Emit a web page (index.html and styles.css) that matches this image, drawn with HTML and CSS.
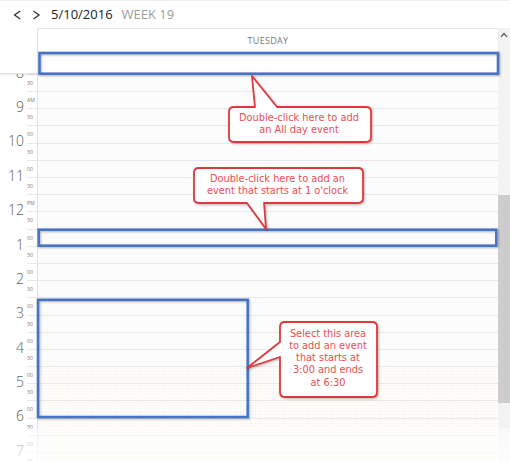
FILE: index.html
```html
<!DOCTYPE html>
<html>
<head>
<meta charset="utf-8">
<link rel="stylesheet" href="styles.css">
</head>
<body>
<div class="app">
  <header class="topbar">
    <span class="nav"><svg width="10" height="12" viewBox="0 0 10 12"><path d="M8.3 2 L2.5 6 L8.3 10" /></svg></span>
    <span class="nav"><svg width="10" height="12" viewBox="0 0 10 12"><path d="M2.5 2 L8 6 L2.5 10" /></svg></span>
    <span class="date">5/10/2016</span>
    <span class="week">WEEK 19</span>
  </header>
  <div class="content">
    <div class="main">
      <div class="dayhead">
        <div class="corner"></div>
        <div class="dayname">TUESDAY</div>
      </div>
      <div class="viewport">
        <div class="timeline">
          <div class="hour"><div class="num">8</div><div class="mark m1">00</div><div class="slot s1"></div><div class="mark m2">30</div><div class="slot s2"></div></div>
          <div class="hour"><div class="num">9</div><div class="mark m1">AM</div><div class="slot s1"></div><div class="mark m2">30</div><div class="slot s2"></div></div>
          <div class="hour"><div class="num">10</div><div class="mark m1">00</div><div class="slot s1"></div><div class="mark m2">30</div><div class="slot s2"></div></div>
          <div class="hour"><div class="num">11</div><div class="mark m1">00</div><div class="slot s1"></div><div class="mark m2">30</div><div class="slot s2"></div></div>
          <div class="hour"><div class="num">12</div><div class="mark m1">PM</div><div class="slot s1"></div><div class="mark m2">30</div><div class="slot s2"></div></div>
          <div class="hour"><div class="num">1</div><div class="mark m1">00</div><div class="slot s1"></div><div class="mark m2">30</div><div class="slot s2"></div></div>
          <div class="hour"><div class="num">2</div><div class="mark m1">00</div><div class="slot s1"></div><div class="mark m2">30</div><div class="slot s2"></div></div>
          <div class="hour"><div class="num">3</div><div class="mark m1">00</div><div class="slot s1"></div><div class="mark m2">30</div><div class="slot s2"></div></div>
          <div class="hour"><div class="num">4</div><div class="mark m1">00</div><div class="slot s1"></div><div class="mark m2">30</div><div class="slot s2"></div></div>
          <div class="hour off"><div class="num">5</div><div class="mark m1">00</div><div class="slot s1"></div><div class="mark m2">30</div><div class="slot s2"></div></div>
          <div class="hour off"><div class="num">6</div><div class="mark m1">00</div><div class="slot s1"></div><div class="mark m2">30</div><div class="slot s2"></div></div>
          <div class="hour off"><div class="num">7</div><div class="mark m1">00</div><div class="slot s1"></div><div class="mark m2">30</div><div class="slot s2"></div></div>
        </div>
      </div>
    </div>
    <div class="scrollbar">
      <svg class="up" width="8" height="6" viewBox="0 0 8 6"><path d="M1 4.8 L4 1.5 L7 4.8" /></svg>
      <div class="thumb"></div>
    </div>
  </div>
  <div class="fade"></div>
  <svg class="annotations" width="510" height="461" viewBox="0 0 510 461">
    <rect class="sel" x="39.5" y="53" width="458.5" height="20.7" />
    <rect class="sel" x="38.7" y="229.7" width="457.6" height="16" />
    <rect class="sel" x="38" y="299.8" width="209.7" height="117.2" />

    <path class="callout" d="M234 107 L255 107 L252 76 L277 107 L366 107 Q371 107 371 112 L371 137 Q371 142 366 142 L234 142 Q229 142 229 137 L229 112 Q229 107 234 107 Z" />
    <text class="note" x="299" y="120.7">Double-click here to add</text>
    <text class="note" x="299" y="133">an All day event</text>

    <path class="callout" d="M199 168 L358 168 Q363 168 363 173 L363 198 Q363 203 358 203 L264 203 L266 229 L247 203 L199 203 Q194 203 194 198 L194 173 Q194 168 199 168 Z" />
    <text class="note" x="277.5" y="182.3">Double-click here to add an</text>
    <text class="note" x="277.5" y="194.3">event that starts at 1 o'clock</text>

    <path class="callout" d="M285 322 L372 322 Q377 322 377 327 L377 392 Q377 397 372 397 L285 397 Q280 397 280 392 L280 357 L247 368 L280 342 L280 327 Q280 322 285 322 Z" />
    <text class="note" x="328" y="337.3">Select this area</text>
    <text class="note" x="328" y="349.3">to add an event</text>
    <text class="note" x="328" y="361.3">that starts at</text>
    <text class="note" x="328" y="373.3">3:00 and ends</text>
    <text class="note" x="328" y="385.5">at 6:30</text>
  </svg>
</div>
</body>
</html>
```
FILE: styles.css
```css
* { box-sizing: border-box; margin: 0; padding: 0; }
html, body { width: 510px; height: 461px; overflow: hidden; background: #fff; }
body { font-family: "Open Sans", "Noto Sans", sans-serif; }

.app {
  position: relative;
  width: 510px;
  height: 461px;
  display: flex;
  flex-direction: column;
  background: #fff;
}

.topbar {
  height: 28px;
  flex: none;
  display: flex;
  align-items: center;
  padding-left: 12px;
  border-top: 1px solid #eeeeee;
}
.nav { display: flex; width: 10px; height: 12px; }
.nav + .nav { margin-left: 9px; }
.nav svg path { fill: none; stroke: #333; stroke-width: 1.3; }
.date { margin-left: 10px; font-size: 13px; line-height: 13px; color: #222; }
.week { margin-left: 9px; font-size: 13px; line-height: 13px; color: #9a9a9a; }

.content { flex: 1; display: flex; min-height: 0; }
.main { flex: 1; display: flex; flex-direction: column; min-width: 0; }

.dayhead {
  height: 46px;
  flex: none;
  display: flex;
  position: relative;
  z-index: 1;
  background: #fff;
  border-bottom: 1px solid #e0e0e0;
  box-shadow: 0 1px 2px rgba(0, 0, 0, 0.08);
}
.corner { width: 37px; }
.dayname {
  flex: 1;
  border-top: 1px solid #e6e6e6;
  border-left: 1px solid #e2e2e2;
  text-align: center;
  font-size: 9px;
  line-height: 9px;
  padding-top: 7px;
  color: #777;
  letter-spacing: 0.3px;
}

.viewport { flex: 1; overflow: hidden; min-height: 0; }
.timeline { margin-top: -17.3px; }

.hour {
  display: grid;
  grid-template-columns: 27px 10px 1fr;
  grid-template-rows: 17.2px 17.2px;
}
.num {
  grid-column: 1;
  grid-row: 1 / 3;
  text-align: right;
  padding-right: 3px;
  padding-top: 9px;
  font-size: 14px;
  line-height: 14px;
  font-weight: 300;
  color: #5d5d5d;
}
.mark {
  grid-column: 2;
  border-top: 1px solid #e8e8e8;
  font-size: 5.2px;
  line-height: 16px;
  color: #777;
}
.slot {
  grid-column: 3;
  border-top: 1px solid #e8e8e8;
  border-left: 1px solid #e2e2e2;
  background: #fdfcfd;
}
.m1, .s1 { grid-row: 1; }
.m2, .s2 { grid-row: 2; }
.off .slot {
  background-color: #fdfcf9;
  background-image: radial-gradient(circle, #f1efe8 0.5px, transparent 0.9px);
  background-size: 3px 3px;
}

.scrollbar {
  width: 12px;
  flex: none;
  background: #f3f3f3;
  display: flex;
  flex-direction: column;
  align-items: center;
}
.up { margin-top: 4px; flex: none; }
.up path { fill: none; stroke: #555; stroke-width: 1.2; }
.thumb { margin-top: 157px; width: 12px; height: 208px; background: #cdcdcd; }

.fade {
  position: absolute;
  z-index: 2;
  left: 0;
  right: 0;
  top: 428px;
  bottom: 0;
  background: linear-gradient(rgba(255, 255, 255, 0.45), rgba(255, 255, 255, 0.75));
  pointer-events: none;
}

.annotations {
  position: absolute;
  z-index: 3;
  left: 0;
  top: 0;
  pointer-events: none;
}
.sel {
  fill: none;
  stroke: #4472c4;
  stroke-width: 2.5;
  filter: drop-shadow(1px 1px 1px rgba(0, 0, 0, 0.3));
}
.callout {
  fill: #fff;
  stroke: #e0393b;
  stroke-width: 1.8;
  stroke-linejoin: round;
  filter: drop-shadow(1px 1px 1.2px rgba(0, 0, 0, 0.28));
}
.note {
  font-family: "DejaVu Sans", Verdana, sans-serif;
  font-size: 9.8px;
  fill: #ea4d52;
  text-anchor: middle;
}
```
